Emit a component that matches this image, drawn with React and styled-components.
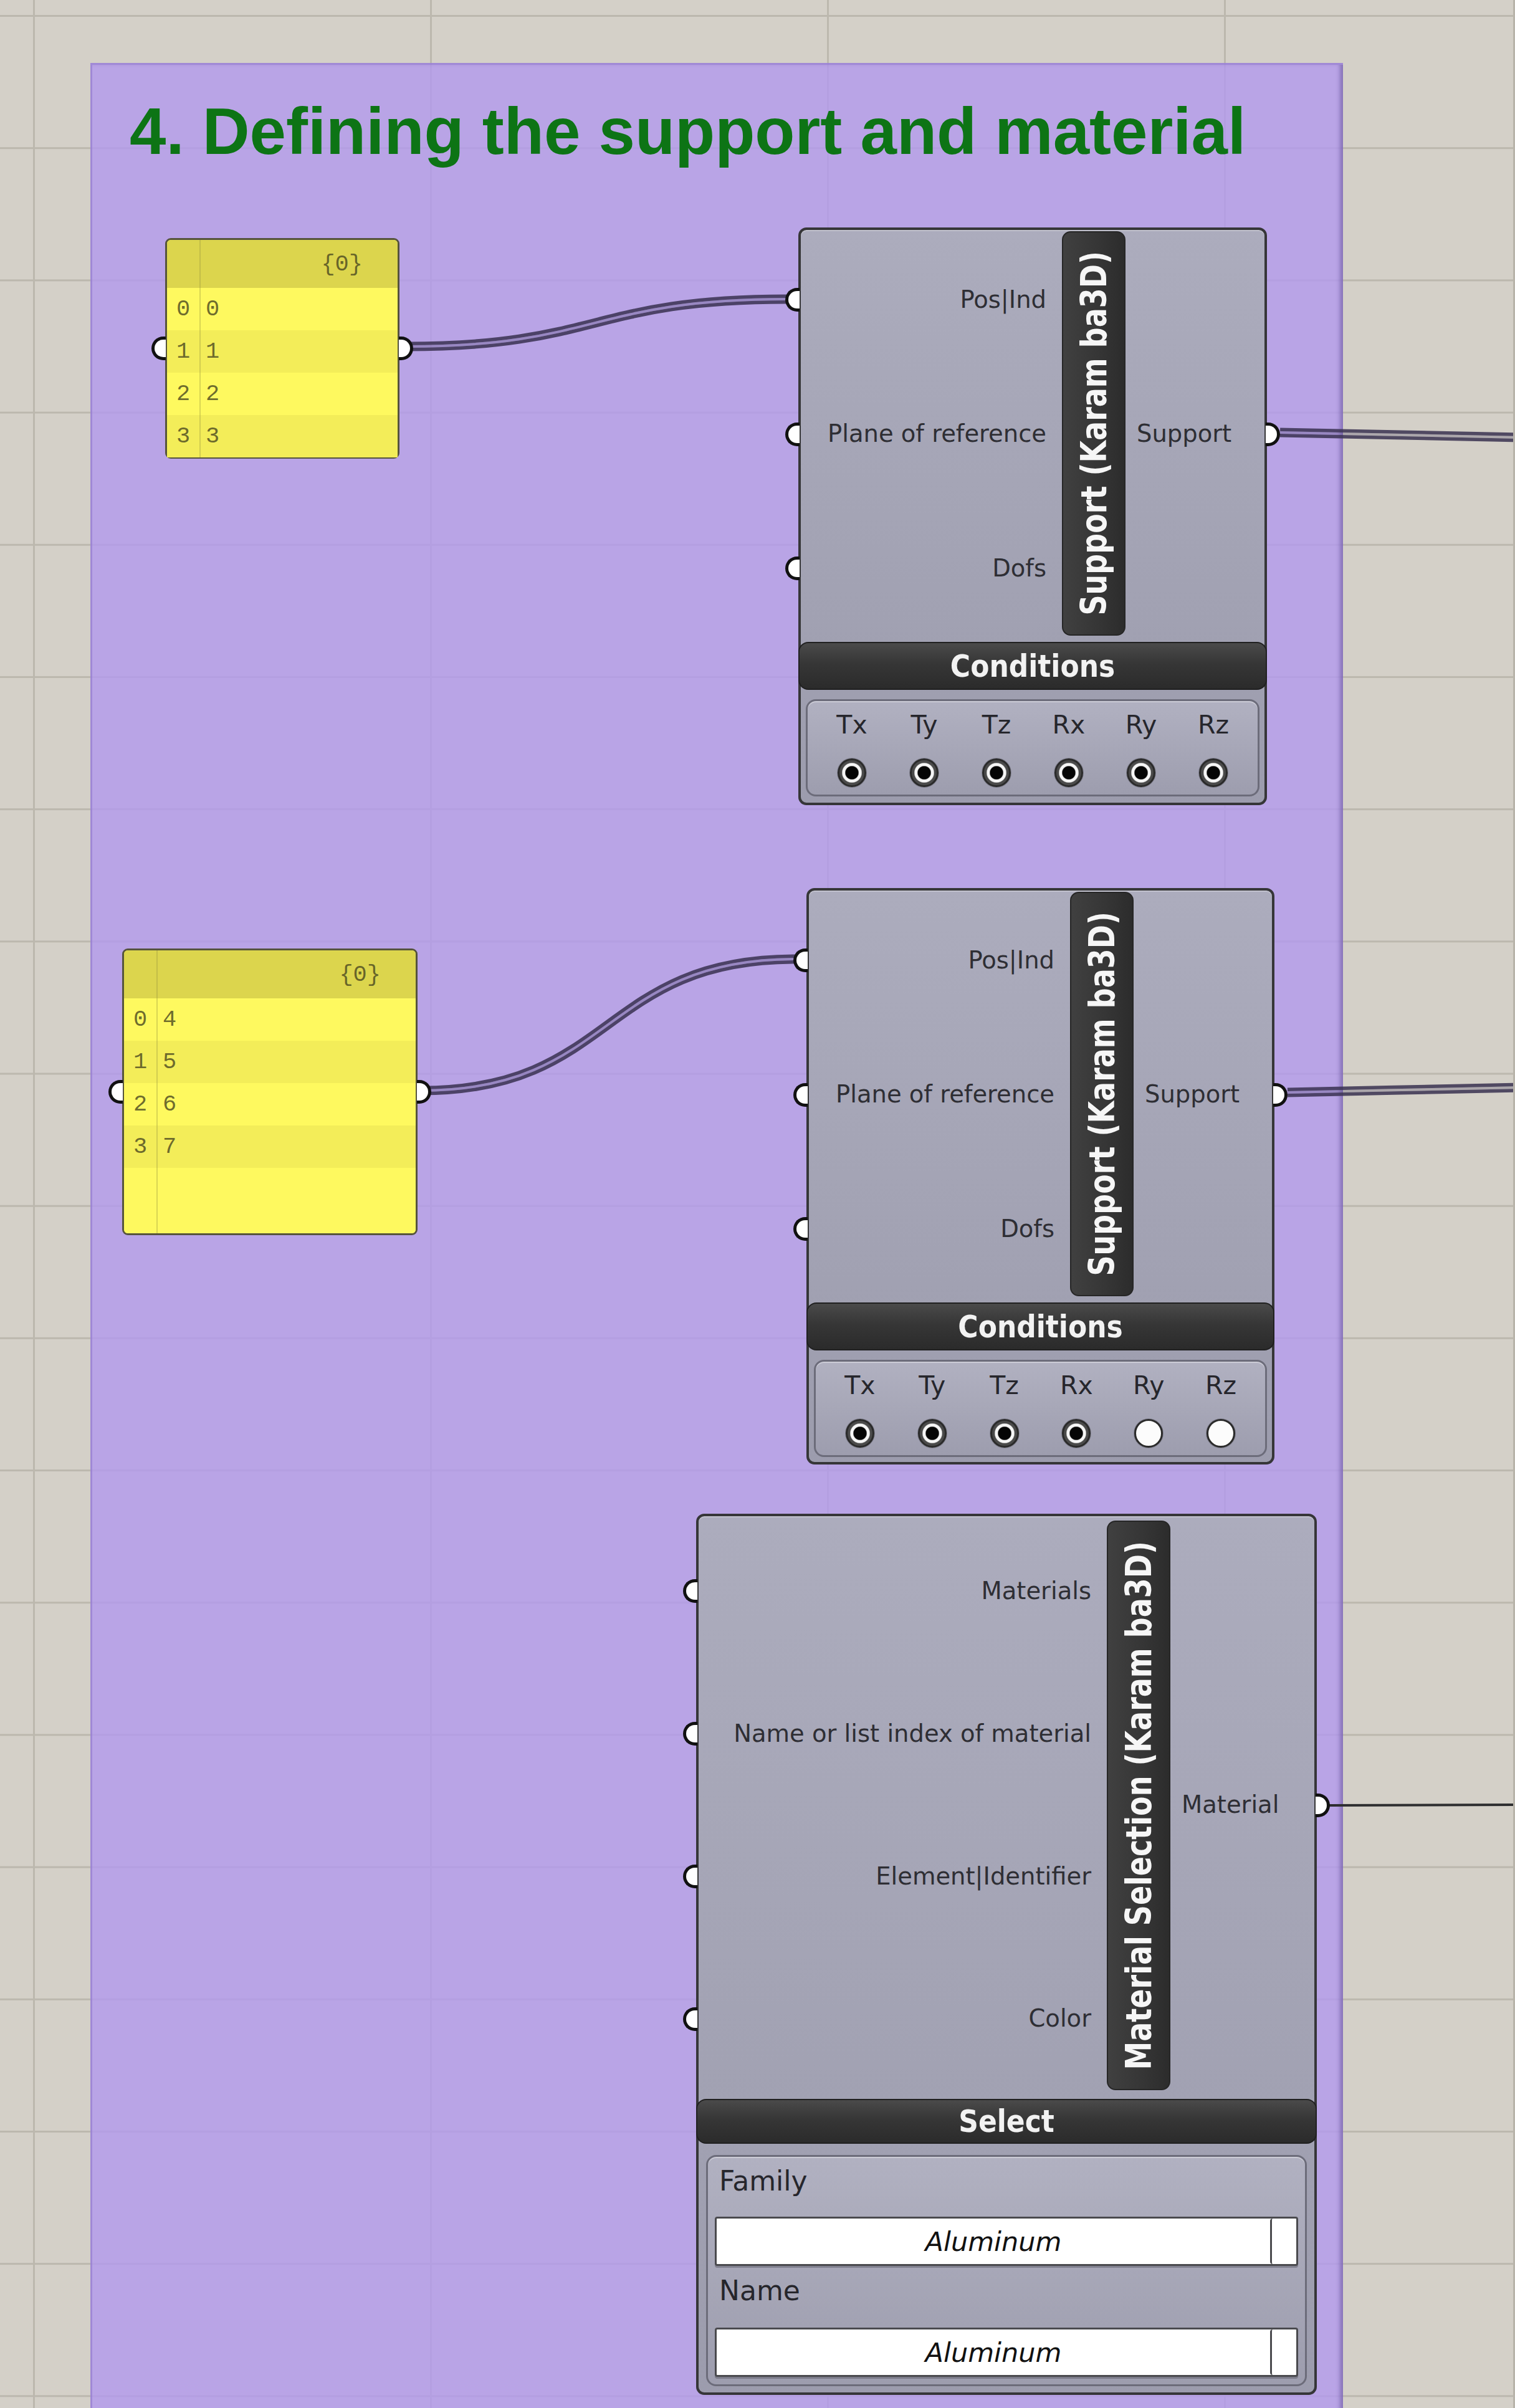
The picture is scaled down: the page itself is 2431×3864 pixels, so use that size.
import React from "react";
import styled, { createGlobalStyle } from "styled-components";

const Global = createGlobalStyle`
  *, *::before, *::after { box-sizing: border-box; }
  html, body { margin: 0; padding: 0; background: #d4d0c8; }
  body { width: 2431px; height: 3864px; overflow: hidden; }
`;

const Canvas = styled.div`
  position: relative;
  width: 2431px;
  height: 3864px;
  overflow: hidden;
  background-color: #d4d0c8;
  background-image:
    linear-gradient(to right, #bcb8ae 0 3px, transparent 3px),
    linear-gradient(to bottom, #bcb8ae 0 3px, transparent 3px);
  background-size: 637px 100%, 100% 212.2px;
  background-position: 53px 0, 0 24px;
  border-right: 3px solid #b8b4aa;
  font-family: "DejaVu Sans", "Open Sans", sans-serif;
`;

const Group = styled.section`
  position: absolute;
  left: 145px;
  top: 101px;
  width: 2010px;
  height: 3800px;
  background: rgba(178, 152, 238, 0.8);
  border-top: 3px solid rgba(140, 115, 200, 0.55);
  border-left: 3px solid rgba(140, 115, 200, 0.55);
  box-shadow: inset -8px 0 6px -3px rgba(95, 75, 145, 0.55);
  padding: 54px 0 0 60px;
`;

const GroupTitle = styled.h1`
  margin: 0;
  font-family: "Liberation Sans", Arial, sans-serif;
  font-weight: 700;
  font-size: 105px;
  line-height: 105px;
  color: #0d7415;
  white-space: nowrap;
`;

const WireLayer = styled.svg`
  position: absolute;
  left: 0;
  top: 0;
  width: 2431px;
  height: 3864px;
  overflow: visible;
  pointer-events: none;
`;

/* ---------- yellow list panels ---------- */
const ListPanel = styled.div`
  position: absolute;
  left: ${(p) => p.$x}px;
  top: ${(p) => p.$y}px;
  width: ${(p) => p.$w}px;
  height: ${(p) => p.$h}px;
  display: flex;
  flex-direction: column;
  background: #fef95f;
  border: 3px solid #56543c;
  border-radius: 9px;
  font-family: "Liberation Mono", "DejaVu Sans Mono", monospace;
  font-size: 37px;
  color: rgba(72, 70, 32, 0.8);
`;

const PanelRow = styled.div`
  display: grid;
  grid-template-columns: 54px 1fr;
  flex: ${(p) => (p.$fill ? "1" : "none")};
  height: ${(p) => (p.$fill ? "auto" : `${p.$h}px`)};
  background: ${(p) => p.$bg};
  border-radius: ${(p) => p.$radius || "0"};
`;

const IndexCell = styled.div`
  display: flex;
  align-items: center;
  padding-left: 15px;
  border-right: 2px solid rgba(150, 145, 60, 0.35);
`;

const ValueCell = styled.div`
  display: flex;
  align-items: center;
  justify-content: ${(p) => (p.$right ? "flex-end" : "flex-start")};
  padding: ${(p) => (p.$right ? "0 56px 0 0" : "0 0 0 8px")};
`;

/* ---------- grey components ---------- */
const Node = styled.div`
  position: absolute;
  left: ${(p) => p.$x}px;
  top: ${(p) => p.$y}px;
  width: ${(p) => p.$w}px;
  height: ${(p) => p.$h}px;
  display: flex;
  flex-direction: column;
  border: 4px solid #363638;
  border-radius: 13px;
  background: linear-gradient(180deg, #acacbd 0%, #9c9cad 100%);
  box-shadow: inset 0 2px 0 rgba(255, 255, 255, 0.25);
`;

const NodeMain = styled.div`
  display: grid;
  grid-template-columns: ${(p) => p.$inW}px 102px 1fr;
  height: ${(p) => p.$h}px;
  flex: none;
`;

const PortColumn = styled.div`
  display: flex;
  flex-direction: column;
  padding-top: ${(p) => p.$pt}px;
`;

const PortRow = styled.div`
  position: relative;
  flex: 1;
  display: flex;
  align-items: center;
  justify-content: ${(p) => (p.$out ? "flex-start" : "flex-end")};
  padding: ${(p) => (p.$out ? "0 0 0 18px" : "0 25px 0 0")};
`;

const PortLabel = styled.span`
  font-size: 38.5px;
  line-height: 1;
  color: #2e2e34;
  white-space: nowrap;
`;

const Grip = styled.span`
  position: absolute;
  top: 50%;
  width: 23px;
  height: 38px;
  margin-top: -19px;
  background: #ffffff;
  border: 5px solid #111111;
  ${(p) =>
    p.$out
      ? `right: -25px; border-left: none; border-radius: 0 19px 19px 0;`
      : `left: -25px; border-right: none; border-radius: 19px 0 0 19px;`}
`;

const TitleBar = styled.div`
  margin-top: ${(p) => p.$mt}px;
  background: linear-gradient(90deg, #404040, #363636 55%, #2c2c2c);
  border: 2px solid #262626;
  border-radius: 14px;
  display: flex;
  align-items: center;
  justify-content: center;
  overflow: hidden;
`;

const TitleText = styled.span`
  writing-mode: vertical-rl;
  transform: rotate(180deg) scaleX(1.22);
  font-weight: 700;
  font-size: 46px;
  line-height: 1;
  color: #f6f6f6;
  white-space: nowrap;
`;

const SectionBar = styled.div`
  flex: none;
  margin: ${(p) => p.$mt}px -4px 0;
  height: ${(p) => p.$h}px;
  background: linear-gradient(180deg, #4a4a4a, #363636 45%, #2b2b2b);
  border: 2px solid #202020;
  border-radius: 16px;
  display: flex;
  align-items: center;
  justify-content: center;
`;

const SectionText = styled.span`
  display: inline-block;
  transform: scaleY(1.12);
  font-weight: 700;
  font-size: 44px;
  line-height: 1;
  color: #f2f2f2;
`;

const Inset = styled.div`
  flex: none;
  margin: ${(p) => p.$mt}px ${(p) => p.$mx}px 0;
  height: ${(p) => p.$h}px;
  border: 3px solid #6c6c7a;
  border-radius: 16px;
  background: linear-gradient(180deg, #b1b1c1, #9d9dae);
  box-shadow: inset 0 2px 0 rgba(255, 255, 255, 0.35);
`;

const DofGrid = styled(Inset)`
  display: grid;
  grid-template-columns: repeat(6, 1fr);
  padding: 13px 13px 0;
`;

const DofCell = styled.div`
  display: flex;
  flex-direction: column;
  align-items: center;
`;

const DofLabel = styled.span`
  height: 50px;
  line-height: 50px;
  font-size: 41px;
  color: #26262c;
`;

const Radio = styled.span`
  margin-top: 29px;
  width: 46px;
  height: 46px;
  border-radius: 50%;
  border: 3px solid #2a2a2a;
  background: ${(p) =>
    p.$on
      ? "radial-gradient(circle, #050505 0 10px, #f6f6f6 11.5px 15px, #4a4a4a 16.5px)"
      : "#fcfcfc"};
  box-shadow: 0 0 0 1px rgba(70, 70, 80, 0.35);
`;

const FieldStack = styled(Inset)`
  display: flex;
  flex-direction: column;
  padding: 14px 11px 0;
`;

const FieldLabel = styled.span`
  margin-top: ${(p) => p.$mt}px;
  height: 50px;
  line-height: 50px;
  padding-left: 7px;
  font-size: 44px;
  color: #26262c;
`;

const TextBox = styled.div`
  margin-top: ${(p) => p.$mt}px;
  height: 79px;
  display: grid;
  grid-template-columns: 1fr 42px;
  background: #ffffff;
  border: 3px solid #4a4a4e;
  border-radius: 4px;
  box-shadow: 0 3px 0 rgba(60, 60, 70, 0.35);
`;

const TextValue = styled.span`
  display: flex;
  align-items: center;
  justify-content: center;
  font-style: italic;
  font-size: 43px;
  color: #111;
`;

const TextButton = styled.span`
  background: #ffffff;
  border-left: 3px solid #4a4a4e;
  border-radius: 4px;
`;

/* ---------- data ---------- */
const dofNames = ["Tx", "Ty", "Tz", "Rx", "Ry", "Rz"];

function Wire({ id, d, single }) {
  if (single) {
    return <path d={d} fill="none" stroke="#2e2e30" strokeWidth="4" />;
  }
  return (
    <g>
      <mask id={id} maskUnits="userSpaceOnUse" x="0" y="0" width="2431" height="3864">
        <rect x="0" y="0" width="2431" height="3864" fill="#fff" />
        <path d={d} fill="none" stroke="#000" strokeWidth="4" />
      </mask>
      <path d={d} fill="none" stroke="rgba(58,50,82,0.86)" strokeWidth="15" mask={`url(#${id})`} />
      <path d={d} fill="none" stroke="rgba(70,60,100,0.28)" strokeWidth="4" />
    </g>
  );
}

function Panel({ x, y, w, h, header, rows }) {
  return (
    <ListPanel $x={x} $y={y} $w={w} $h={h}>
      <PanelRow $h={77} $bg="#dcd54d" $radius="6px 6px 0 0">
        <IndexCell />
        <ValueCell $right>{header}</ValueCell>
      </PanelRow>
      {rows.map((v, i) => (
        <PanelRow key={i} $h={68} $bg={i % 2 === 0 ? "#fef95f" : "#f3ed59"}>
          <IndexCell>{i}</IndexCell>
          <ValueCell>{v}</ValueCell>
        </PanelRow>
      ))}
      <PanelRow $fill $bg="#fef95f" $radius="0 0 6px 6px">
        <IndexCell />
        <ValueCell />
      </PanelRow>
      <Grip />
      <Grip $out />
    </ListPanel>
  );
}

function SupportNode({ x, y, w, h, dofs }) {
  return (
    <Node $x={x} $y={y} $w={w} $h={h}>
      <NodeMain $inW={419} $h={651}>
        <PortColumn $pt={4}>
          {["Pos|Ind", "Plane of reference", "Dofs"].map((l) => (
            <PortRow key={l}>
              <Grip />
              <PortLabel>{l}</PortLabel>
            </PortRow>
          ))}
        </PortColumn>
        <TitleBar $mt={2}>
          <TitleText>Support (Karam ba3D)</TitleText>
        </TitleBar>
        <PortColumn $pt={4}>
          <PortRow $out>
            <PortLabel>Support</PortLabel>
            <Grip $out />
          </PortRow>
        </PortColumn>
      </NodeMain>
      <SectionBar $mt={10} $h={77}>
        <SectionText>Conditions</SectionText>
      </SectionBar>
      <DofGrid $mt={15} $mx={8} $h={156}>
        {dofNames.map((n, i) => (
          <DofCell key={n}>
            <DofLabel>{n}</DofLabel>
            <Radio $on={dofs[i]} />
          </DofCell>
        ))}
      </DofGrid>
    </Node>
  );
}

function MaterialNode({ x, y }) {
  return (
    <Node $x={x} $y={y} $w={996} $h={1414}>
      <NodeMain $inW={655} $h={921}>
        <PortColumn $pt={6}>
          {["Materials", "Name or list index of material", "Element|Identifier", "Color"].map((l) => (
            <PortRow key={l}>
              <Grip />
              <PortLabel>{l}</PortLabel>
            </PortRow>
          ))}
        </PortColumn>
        <TitleBar $mt={7}>
          <TitleText>Material Selection (Karam ba3D)</TitleText>
        </TitleBar>
        <PortColumn $pt={6}>
          <PortRow $out>
            <PortLabel>Material</PortLabel>
            <Grip $out />
          </PortRow>
        </PortColumn>
      </NodeMain>
      <SectionBar $mt={14} $h={72}>
        <SectionText>Select</SectionText>
      </SectionBar>
      <FieldStack $mt={18} $mx={12} $h={371}>
        <FieldLabel $mt={0}>Family</FieldLabel>
        <TextBox $mt={32}>
          <TextValue>Aluminum</TextValue>
          <TextButton />
        </TextBox>
        <FieldLabel $mt={15}>Name</FieldLabel>
        <TextBox $mt={34}>
          <TextValue>Aluminum</TextValue>
          <TextButton />
        </TextBox>
      </FieldStack>
    </Node>
  );
}

export default function App() {
  return (
    <>
      <Global />
      <Canvas>
        <Group>
          <GroupTitle>4. Defining the support and material</GroupTitle>
        </Group>

        <WireLayer viewBox="0 0 2431 3864">
          <Wire id="w1" d="M 652 556 C 960 556, 950 480, 1262 480" />
          <Wire id="w2" d="M 676 1750 C 985 1750, 965 1539, 1276 1539" />
          <Wire id="w3" d="M 2054 694 C 2200 696, 2300 700, 2440 702" />
          <Wire id="w4" d="M 2066 1753 C 2200 1751, 2300 1747, 2440 1745" />
          <Wire single d="M 2132 2897 L 2440 2896" />
        </WireLayer>

        <Panel x={265} y={382} w={376} h={354} header="{0}" rows={["0", "1", "2", "3"]} />
        <Panel x={196} y={1522} w={474} h={460} header="{0}" rows={["4", "5", "6", "7"]} />

        <SupportNode x={1281} y={365} w={752} h={927} dofs={[true, true, true, true, true, true]} />
        <SupportNode x={1294} y={1425} w={751} h={925} dofs={[true, true, true, true, false, false]} />

        <MaterialNode x={1117} y={2429} />
      </Canvas>
    </>
  );
}
